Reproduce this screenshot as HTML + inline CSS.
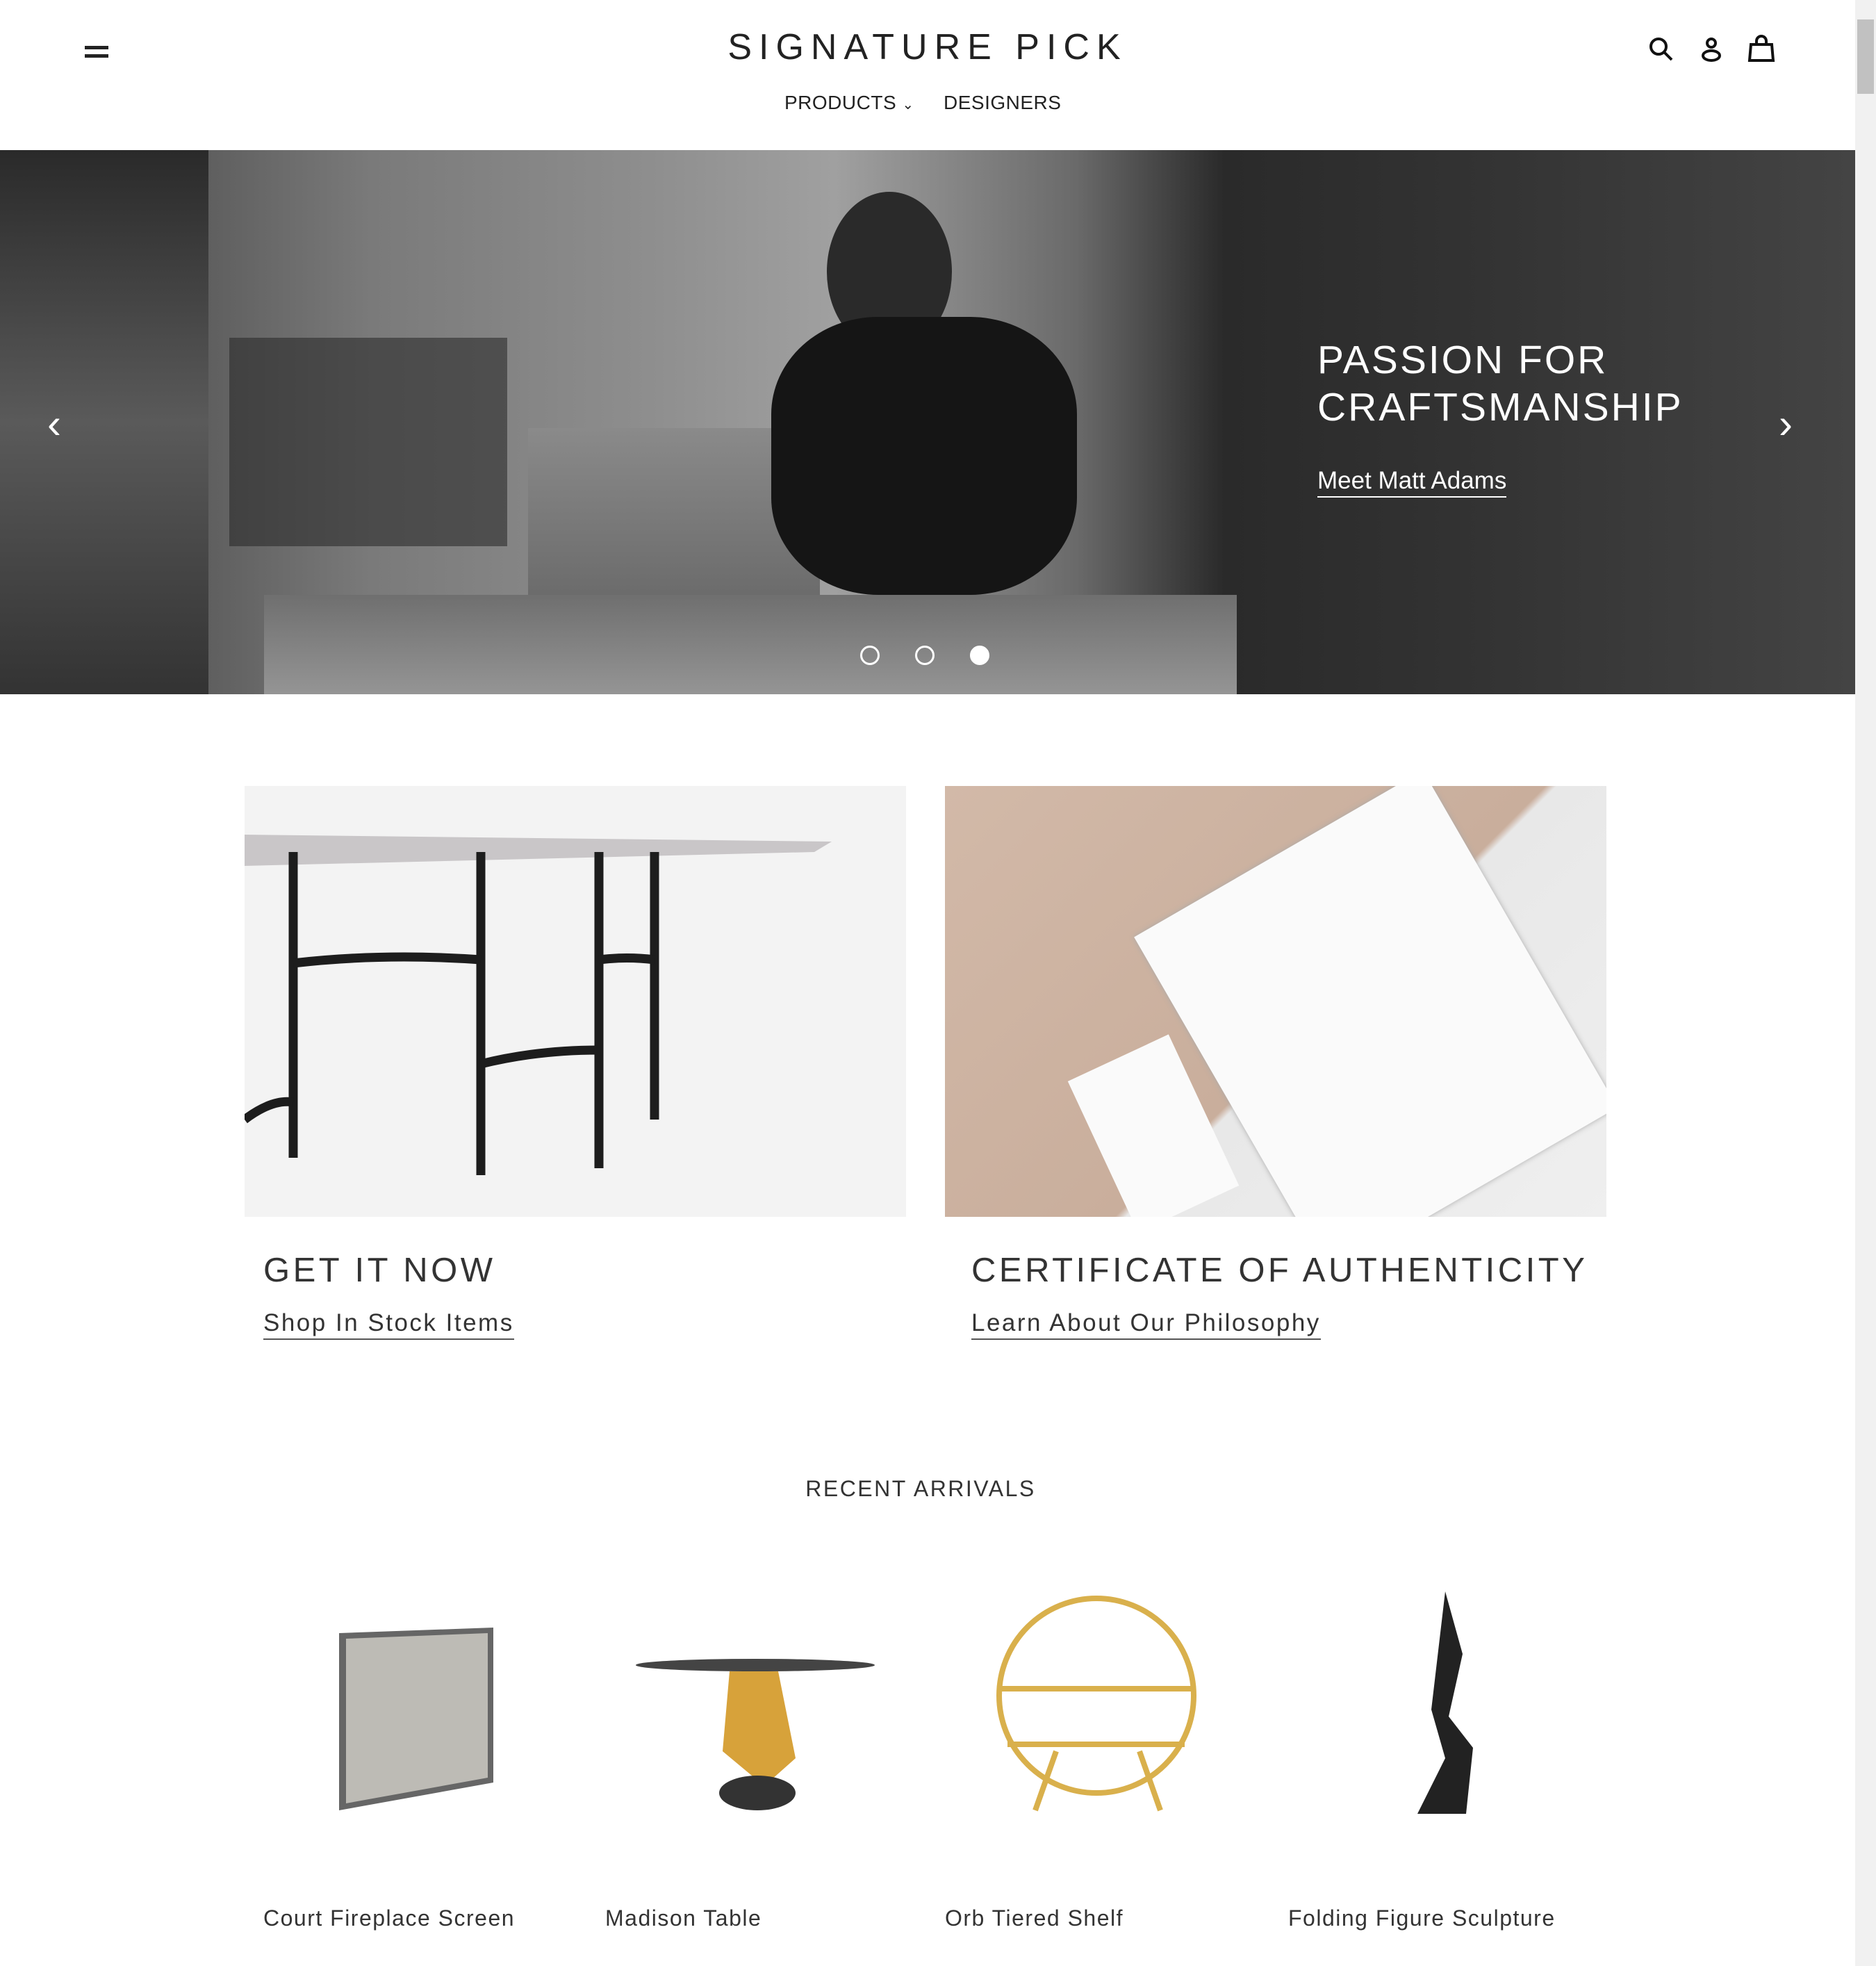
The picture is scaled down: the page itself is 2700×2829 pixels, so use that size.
<!DOCTYPE html>
<html><head><meta charset="utf-8"><style>
*{margin:0;padding:0;box-sizing:border-box}
body{width:2700px;height:2829px;background:#fff;font-family:"Liberation Sans",sans-serif;color:#3a3a3a;position:relative;overflow:hidden}
.a{position:absolute}
.logo{left:0;width:2670px;top:38px;text-align:center;font-size:52px;letter-spacing:10px;color:#222}
.nav{top:132px;font-size:28px;color:#222;letter-spacing:.5px}
.hero{left:0;top:216px;width:2670px;height:783px;background:
linear-gradient(90deg,#3a3a3a 0,#555 8%,#7a7a7a 20%,#8e8e8e 35%,#a0a0a0 45%,#6a6a6a 58%,#2a2a2a 66%,#333 80%,#444 100%);overflow:hidden}
.ht{color:#fff;font-size:57px;letter-spacing:3px;line-height:68px;left:1896px;top:484px}
.hl{color:#fff;font-size:35px;left:1896px;top:670px;border-bottom:2px solid #fff;line-height:44px}
.dot{width:28px;height:28px;border-radius:50%;border:3px solid #fff;top:929px}
h2{position:absolute;font-weight:normal;font-size:49px;letter-spacing:4.5px;color:#333}
.lk{position:absolute;font-size:35px;letter-spacing:2.5px;color:#333;border-bottom:2px solid #555;line-height:44px}
.pt{position:absolute;top:2742px;font-size:32px;letter-spacing:1.5px;color:#333}
</style></head><body>
<div class="a" style="left:122px;top:66px;width:34px;height:5px;background:#222"></div>
<div class="a" style="left:122px;top:78px;width:34px;height:5px;background:#222"></div>
<div class="a logo">SIGNATURE PICK</div>
<div class="a nav" style="left:1129px">PRODUCTS <span style="font-size:20px">⌄</span></div>
<div class="a nav" style="left:1358px">DESIGNERS</div>
<svg class="a" style="left:2370px;top:50px" width="200" height="40" viewBox="0 0 200 40" fill="none" stroke="#111" stroke-width="4">
<circle cx="17" cy="17" r="11"/><path d="M25 25 L36 36"/>
<circle cx="93" cy="12" r="6"/><ellipse cx="93" cy="30" rx="12" ry="7"/>
<path d="M150 14 H180 L182 37 H148 Z M158 14 V9 a7 7 0 0 1 14 0 V14"/>
</svg>
<div class="a" style="left:2670px;top:0;width:30px;height:2829px;background:#f1f1f1"></div>
<div class="a" style="left:2673px;top:28px;width:24px;height:107px;background:#c1c1c1"></div>
<div class="hero a">
<div class="a" style="left:0;top:0;width:300px;height:783px;background:linear-gradient(180deg,#2a2a2a,#5a5a5a 50%,#333)"></div>
<div class="a" style="left:330px;top:270px;width:400px;height:300px;background:#2b2b2b;opacity:.6"></div>
<div class="a" style="left:760px;top:400px;width:420px;height:380px;background:linear-gradient(180deg,#8a8a8a,#5a5a5a)"></div>
<div class="a" style="left:380px;top:640px;width:1400px;height:160px;background:linear-gradient(180deg,#6f6f6f,#999)"></div>
<div class="a" style="left:1190px;top:60px;width:180px;height:230px;border-radius:50%;background:#2a2a2a"></div>
<div class="a" style="left:1110px;top:240px;width:440px;height:400px;border-radius:35%;background:#151515"></div>
</div>
<div class="a" style="left:68px;top:575px;color:#fff;font-size:60px">‹</div>
<div class="a" style="left:2560px;top:575px;color:#fff;font-size:60px">›</div>
<div class="a ht">PASSION FOR<br>CRAFTSMANSHIP</div>
<div class="a hl">Meet Matt Adams</div>
<div class="a dot" style="left:1238px"></div>
<div class="a dot" style="left:1317px"></div>
<div class="a dot" style="left:1396px;background:#fff"></div>
<div class="a" style="left:352px;top:1131px;width:952px;height:620px;background:#f3f3f3">
<svg width="952" height="620"><path d="M0 70 L845 80 L820 95 L0 115 Z" fill="#c9c6c8"/><g stroke="#1d1d1d" stroke-width="13" fill="none"><path d="M70 95 V535 M340 95 V560 M510 95 V550 M590 95 V480"/><path d="M0 480 Q40 450 70 455 M70 255 Q200 240 340 250 M340 400 Q420 380 510 380 M510 250 Q550 245 590 250"/></g></svg>
</div>
<div class="a" style="left:1360px;top:1131px;width:952px;height:620px;overflow:hidden;background:linear-gradient(135deg,#d2b9a8,#c9ae9c 55%,#e8e8e8 56%,#efefef)">
<div class="a" style="left:380px;top:60px;width:480px;height:560px;background:#fafafa;transform:rotate(-30deg);box-shadow:0 0 8px #aaa"></div>
<div class="a" style="left:220px;top:380px;width:160px;height:240px;background:#fafafa;transform:rotate(-25deg)"></div>
</div>
<h2 style="left:379px;top:1800px">GET IT NOW</h2>
<div class="lk" style="left:379px;top:1882px">Shop In Stock Items</div>
<h2 style="left:1398px;top:1800px">CERTIFICATE OF AUTHENTICITY</h2>
<div class="lk" style="left:1398px;top:1882px">Learn About Our Philosophy</div>
<div class="a" style="left:0;width:2650px;top:2124px;text-align:center;font-size:32px;letter-spacing:2.5px;color:#333">RECENT ARRIVALS</div>
<svg class="a" style="left:380px;top:2270px" width="1900" height="360">
<path d="M108 80 L330 72 V295 L108 335 Z" fill="#666"/><path d="M118 88 L322 80 V288 L118 325 Z" fill="#bdbbb5"/>
<ellipse cx="707" cy="126" rx="172" ry="9" fill="#444"/><path d="M670 135 L740 135 L765 260 L720 300 L660 250 Z" fill="#d7a23a"/><ellipse cx="710" cy="310" rx="55" ry="25" fill="#333"/>
<g stroke="#d9b04c" stroke-width="8" fill="none"><circle cx="1198" cy="170" r="140"/><path d="M1058 160 H1338 M1070 240 H1325 M1110 335 L1140 250 M1290 335 L1260 250"/></g>
<path d="M1700 20 L1725 110 L1705 200 L1740 245 L1730 340 L1660 340 L1700 260 L1680 190 Z" fill="#222"/>
</svg>
<div class="pt" style="left:379px">Court Fireplace Screen</div>
<div class="pt" style="left:871px">Madison Table</div>
<div class="pt" style="left:1360px">Orb Tiered Shelf</div>
<div class="pt" style="left:1854px">Folding Figure Sculpture</div>
</body></html>
